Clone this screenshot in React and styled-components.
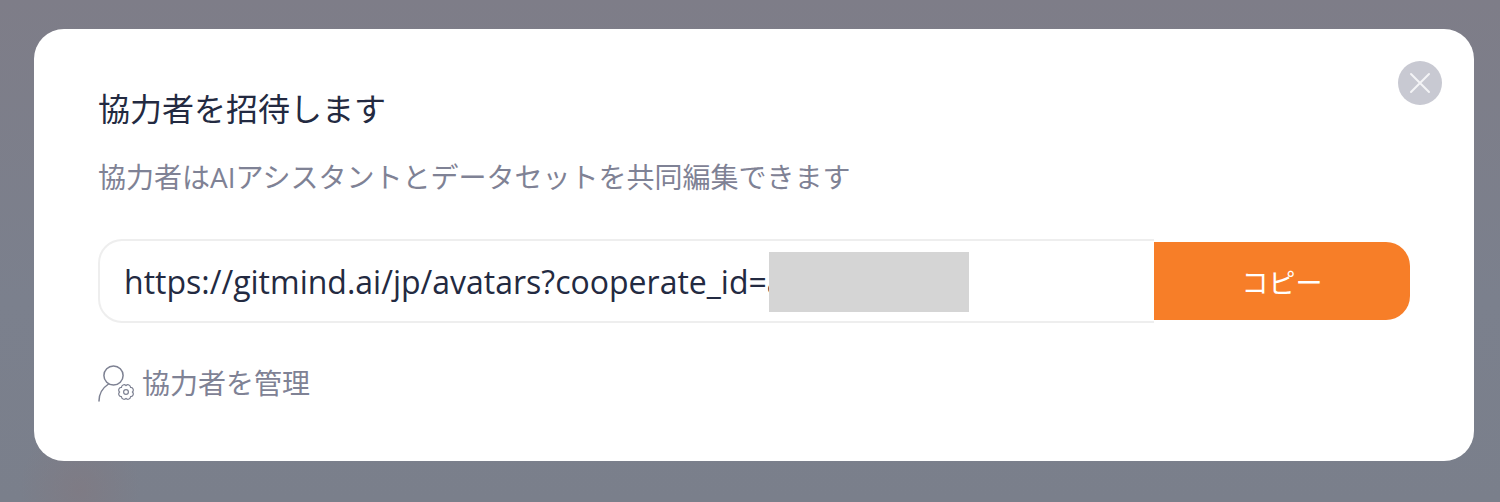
import React from 'react';
import styled, { createGlobalStyle } from 'styled-components';

const GlobalStyle = createGlobalStyle`
  html, body {
    margin: 0;
    padding: 0;
    height: 502px;
    overflow: hidden;
  }
  body {
    font-family: "Open Sans", "Noto Sans CJK JP", sans-serif;
  }
`;

const Backdrop = styled.div`
  box-sizing: border-box;
  width: 1500px;
  height: 502px;
  padding: 29px 26px 41px 34px;
  background-color: #7b7f8c;
  background-image:
    radial-gradient(ellipse 60px 70px at 80px 490px, rgba(130, 120, 127, 0.55) 0%, rgba(130, 120, 127, 0) 100%),
    linear-gradient(180deg, #7e7d88 0%, #7b808d 60%, #7a7f8b 100%);
`;

const Modal = styled.div`
  position: relative;
  box-sizing: border-box;
  width: 1440px;
  height: 432px;
  padding: 60px 64px 0 64px;
  background: #fff;
  border-radius: 30px;
`;

const CloseButton = styled.button`
  position: absolute;
  top: 32px;
  right: 32px;
  width: 44px;
  height: 44px;
  padding: 0;
  display: flex;
  align-items: center;
  justify-content: center;
  border: none;
  border-radius: 50%;
  background: #c8c9d2;
`;

const Title = styled.h2`
  margin: 0;
  font-size: 32px;
  line-height: 40px;
  font-weight: 400;
  color: #232a41;
`;

const Description = styled.p`
  margin: 28px 0 0;
  font-size: 28px;
  line-height: 40px;
  font-weight: 400;
  color: #7f8295;
`;

const LinkRow = styled.div`
  display: flex;
  align-items: center;
  margin-top: 42px;
  width: 1312px;
`;

const UrlField = styled.div`
  position: relative;
  box-sizing: border-box;
  flex: 1;
  height: 84px;
  padding-left: 24px;
  display: flex;
  align-items: center;
  border: 2px solid #eeeeee;
  border-right: none;
  border-radius: 24px 0 0 24px;
  font-size: 32px;
  color: #232a41;
  white-space: nowrap;
  overflow: hidden;
`;

const Redaction = styled.span`
  position: absolute;
  left: 669px;
  top: 11px;
  width: 200px;
  height: 60px;
  background: #d5d5d5;
`;

const CopyButton = styled.button`
  width: 256px;
  height: 78px;
  padding: 0;
  border: none;
  border-radius: 0 24px 24px 0;
  background: #f77e28;
  color: #fff;
  font-family: inherit;
  font-size: 27px;
`;

const ManageLink = styled.a`
  display: flex;
  align-items: center;
  gap: 8px;
  margin-top: 38px;
  font-size: 28px;
  line-height: 44px;
  color: #7f8295;
`;

// scalloped outline for the little gear
const gearPath = (() => {
  const cx = 28;
  const cy = 28;
  const lobes = 8;
  const pts = [];
  for (let i = 0; i < lobes; i++) {
    const a = (i / lobes) * Math.PI * 2;
    pts.push([cx + 6.4 * Math.cos(a), cy + 6.4 * Math.sin(a)]);
  }
  const start = pts[0];
  let d = `M${start[0].toFixed(2)} ${start[1].toFixed(2)}`;
  for (let i = 1; i <= lobes; i++) {
    const p = pts[i % lobes];
    d += `A2.6 2.6 0 0 1 ${p[0].toFixed(2)} ${p[1].toFixed(2)}`;
  }
  return d + 'Z';
})();

function CloseIcon() {
  return (
    <svg width="22" height="22" viewBox="0 0 22 22" fill="none">
      <path d="M2 2L20 20M20 2L2 20" stroke="#f4f4f6" strokeWidth="2" strokeLinecap="round" />
    </svg>
  );
}

function UserGearIcon() {
  return (
    <svg width="36" height="38" viewBox="0 0 36 38" fill="none" stroke="#7d8192" strokeWidth="1.5" strokeLinecap="round" strokeLinejoin="round">
      <circle cx="15.5" cy="11.5" r="9.6" />
      <path d="M1 37C1 29.5 4.5 24 10.5 20" />
      <path d={gearPath} strokeWidth="1.2" />
      <circle cx="28" cy="28" r="2.4" strokeWidth="1.2" />
    </svg>
  );
}

export default function App() {
  return (
    <Backdrop>
      <GlobalStyle />
      <Modal>
        <CloseButton aria-label="close">
          <CloseIcon />
        </CloseButton>
        <Title>協力者を招待します</Title>
        <Description>協力者はAIアシスタントとデータセットを共同編集できます</Description>
        <LinkRow>
          <UrlField>
            https://gitmind.ai/jp/avatars?cooperate_id=a
            <Redaction />
          </UrlField>
          <CopyButton>コピー</CopyButton>
        </LinkRow>
        <ManageLink>
          <UserGearIcon />
          協力者を管理
        </ManageLink>
      </Modal>
    </Backdrop>
  );
}
